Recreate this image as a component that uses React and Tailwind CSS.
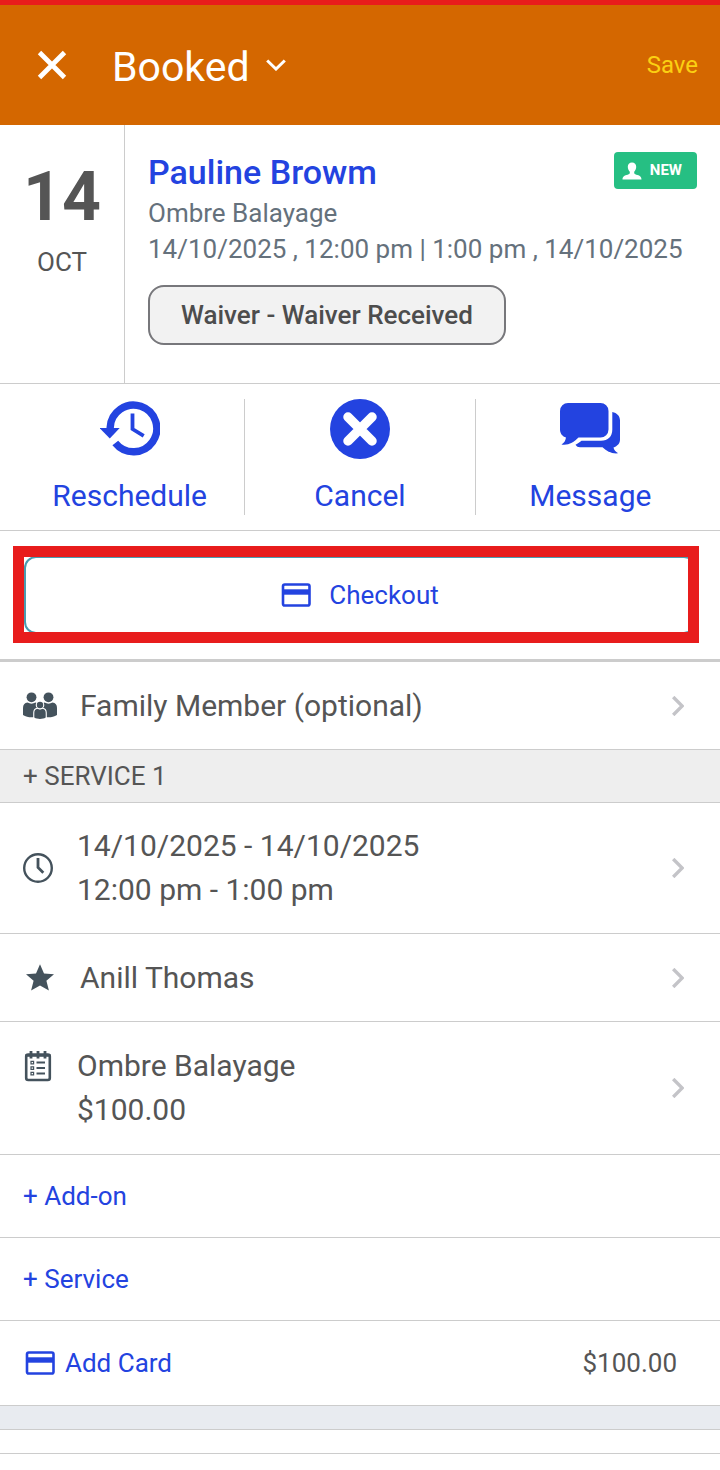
import React, { useState } from 'react';

const STATUSES = ['Booked'];

const CloseIcon = () => (
  <svg className="h-[30px] w-[30px]" viewBox="0 0 30 30" fill="none" stroke="currentColor" strokeWidth="4.8">
    <path d="M2.500 2.500l25 25M27.500 2.500l-25 25" />
  </svg>
);

const CaretIcon = () => (
  <svg className="pointer-events-none h-3 w-5" viewBox="0 0 20 12" fill="none" stroke="currentColor" strokeWidth="3">
    <path d="M1.200 1.500L10 10 18.800 1.500" />
  </svg>
);

const PersonIcon = () => (
  <svg className="h-[18px] w-5" viewBox="0 0 20 18" fill="currentColor">
    <path d="M10 .5c-2.600 0-4.200 1.700-4.200 4.300 0 2 .800 3.800 2 4.900v1.500c-.300.800-1.600 1.200-3.300 1.800C2.300 13.800.500 14.500.500 17.500h19c0-3-1.800-3.700-4-4.500-1.700-.600-3-1-3.300-1.800V9.700c1.200-1.100 2-2.900 2-4.900C14.200 2.200 12.600.500 10 .500z" />
  </svg>
);

const RescheduleIcon = () => (
  <svg className="h-[60px] w-[60px]" viewBox="0 0 60 60" fill="none" stroke="currentColor">
    <path d="M10.200 31V28.500A23.300 23.300 0 1 1 15.300 44" strokeWidth="7.400" />
    <path d="M-.5 29h20.200L9.800 39.500z" fill="currentColor" stroke="none" />
    <path d="M32.500 14.500v15.500l11.200 6.800" strokeWidth="3.800" />
  </svg>
);

const CancelIcon = () => (
  <svg className="h-[60px] w-[60px]" viewBox="0 0 60 60">
    <circle cx="30" cy="30" r="30" fill="currentColor" />
    <path d="M18 18l24 24M42 18L18 42" stroke="#fff" strokeWidth="9.500" strokeLinecap="round" />
  </svg>
);

const MessageIcon = () => (
  <svg className="h-[60px] w-[60px]" viewBox="0 0 60 60" fill="currentColor">
    <path d="M8 4h32.500a8 8 0 0 1 8 8v18.500a8 8 0 0 1-8 8H18.500C13.500 43.500 8.500 46.500 1.500 45.500c3-1.700 4-4 4.500-7C2.500 37.500 0 34.500 0 30.500V12a8 8 0 0 1 8-8z" />
    <path d="M52.300 13c4.700 1 7.700 4 7.700 8.500v19c0 4-2.500 6.500-6.500 8 .5 2.500 2 4.200 4.700 5.800-6.700.700-11.200-2-15.700-6H20c-2 0-3.500-.800-4.500-2.500 2.500-1.200 4.300-2.500 6-4H41c7 0 11.300-4.300 11.300-11.300z" />
  </svg>
);

const CardIcon = () => (
  <svg className="h-6 w-[30px]" viewBox="0 0 30 24" fill="none" stroke="currentColor">
    <rect x="2" y="1.500" width="26.500" height="21" rx="1.800" strokeWidth="2.600" />
    <path d="M2 9h27" strokeWidth="5.400" />
  </svg>
);

const FamilyIcon = () => (
  <svg className="h-7 w-[34px]" viewBox="0 0 34 28" fill="currentColor">
    <circle cx="8.500" cy="5.300" r="4.900" />
    <circle cx="25.500" cy="5.300" r="4.900" />
    <path d="M4.500 10.500c2.500 1.500 5.500 1.500 8 0 3 .500 4.300 2.500 4.300 5.500v7c-2.500 1.800-5.300 2.300-8.300 2.300S2.500 24.800 0 23v-7c0-3.500 1.500-5 4.500-5.500z" />
    <path d="M29.500 10.500c-2.500 1.500-5.500 1.500-8 0-3 .500-4.300 2.500-4.300 5.500v7c2.500 1.800 5.300 2.300 8.300 2.300s6-.500 8.500-2.300v-7c0-3.500-1.500-5-4.500-5.500z" />
    <path
      d="M14.500 16.800c1.600.900 3.400.900 5 0 2.200.300 3.200 1.700 3.200 4v4.700c-1.600 1-3.500 1.400-5.700 1.400s-4.100-.400-5.700-1.400v-4.700c0-2.300 1-3.700 3.200-4z"
      stroke="#fff"
      strokeWidth="2.200"
      paintOrder="stroke"
    />
    <circle cx="17" cy="13" r="3.200" stroke="#fff" strokeWidth="2.200" paintOrder="stroke" />
  </svg>
);

const ClockIcon = () => (
  <svg className="h-[30px] w-[30px]" viewBox="0 0 30 30" fill="none" stroke="currentColor">
    <circle cx="15" cy="15" r="13.800" strokeWidth="2.400" />
    <path d="M15 5v9.500l5.300 5.300" strokeWidth="2.800" />
  </svg>
);

const StarIcon = () => (
  <svg className="h-7 w-[34px]" viewBox="0 0 34 28" fill="currentColor">
    <path d="M17 .3l4 9.200 10 .8-7.600 6.400 2.500 9.900L17 21.400l-8.900 5.200 2.500-9.900L3 10.300l10-.8z" />
  </svg>
);

const ListIcon = () => (
  <svg className="h-[32px] w-[30px]" viewBox="0 0 30 32" fill="none" stroke="currentColor">
    <rect x="3.200" y="4.500" width="23.600" height="25.500" rx="2" strokeWidth="2.600" />
    <path d="M2.500 5.500h25" strokeWidth="2.600" />
    <path d="M8 1v7.500M15 1v7.500M22 1v7.500" strokeWidth="2.800" />
    <path d="M13.500 12.500H22M13.500 18H22M13.500 23.500H22" strokeWidth="2" />
    <path d="M8 11.300h2.600v2.600H8zM8 16.800h2.600v2.600H8zM8 22.300h2.600v2.600H8z" strokeWidth="1.200" />
  </svg>
);

const ChevronIcon = () => (
  <svg className="h-5 w-3 shrink-0 text-[#c4c4c8]" viewBox="0 0 12 20" fill="none" stroke="currentColor" strokeWidth="3.400">
    <path d="M1.200 1l9 9-9 9" />
  </svg>
);

const ACTIONS = [
  { label: 'Reschedule', Icon: RescheduleIcon },
  { label: 'Cancel', Icon: CancelIcon },
  { label: 'Message', Icon: MessageIcon },
];

const ROW = 'flex w-full items-center justify-between border-b border-[#cccccc] pr-9 pl-[23px] text-left text-[30px] leading-[44px]';

export default function App() {
  const [status, setStatus] = useState('Booked');

  return (
    <div className="min-h-screen bg-white font-['Roboto',sans-serif] text-[#555555]">
      {/* Header */}
      <header className="flex items-center justify-between border-t-[5px] border-[#e81c1c] bg-[#d46700] py-[30px] pr-[22px] pl-[37px] text-white">
        <div className="flex items-center gap-[45px]">
          <button aria-label="Close"><CloseIcon /></button>
          <div className="flex items-center gap-4">
            <select
              aria-label="Status"
              value={status}
              onChange={(e) => setStatus(e.target.value)}
              className="h-[60px] appearance-none bg-transparent pt-1 text-[41px] leading-[56px]"
            >
              {STATUSES.map((s) => <option key={s}>{s}</option>)}
            </select>
            <CaretIcon />
          </div>
        </div>
        <button className="text-2xl text-[#fbd012]">Save</button>
      </header>

      {/* Appointment summary */}
      <section className="flex border-b border-[#cccccc]">
        <div className="w-[125px] shrink-0 border-r border-[#cccccc] pt-9 text-center">
          <p className="text-[68px] leading-[72px] font-bold">14</p>
          <p className="pt-[11px] text-[26px] leading-9">OCT</p>
        </div>
        <div className="min-w-0 flex-1 px-[23px] pt-[27px] pb-[38px]">
          <div className="mb-[3px] flex items-start justify-between">
            <h1 className="text-[34px] leading-10 font-medium text-[#2343e0]">Pauline Browm</h1>
            <span className="flex items-center gap-2 rounded bg-[#26bf83] py-1.5 pr-[15px] pl-2 text-[15px] leading-[25px] font-bold text-white">
              <PersonIcon />
              NEW
            </span>
          </div>
          <div className="text-[26px] leading-9 whitespace-nowrap text-[#65717c]">
            <p>Ombre Balayage</p>
            <p>14/10/2025 , 12:00 pm | 1:00 pm , 14/10/2025</p>
          </div>
          <button className="mt-[18px] rounded-2xl border-2 border-[#77777b] bg-[#f2f2f2] px-[31px] py-2.5 text-[26px] leading-9 font-medium text-[#4d4d4d]">
            Waiver - Waiver Received
          </button>
        </div>
      </section>

      {/* Actions */}
      <nav className="flex border-b border-[#cccccc] p-[15px]">
        {ACTIONS.map(({ label, Icon }) => (
          <button
            key={label}
            className="flex flex-1 flex-col items-center gap-[17px] border-r border-[#cccccc] text-[30px] leading-[39px] text-[#2343e0] last:border-r-0"
          >
            <Icon />
            {label}
          </button>
        ))}
      </nav>

      {/* Checkout */}
      <section className="relative border-b-[3px] border-[#cccccc] px-6 py-[25px]">
        <button className="flex w-full items-center justify-center gap-[18px] rounded-xl border-2 border-[#4a9cb0] py-[19px] text-[26px] leading-9 text-[#2343e0]">
          <CardIcon />
          Checkout
        </button>
        <div className="pointer-events-none absolute top-[15px] right-[21px] bottom-4 left-[13px] border-[11px] border-[#e81c1c]" />
      </section>

      <button className={`${ROW} pt-[22px] pb-[21px]`}>
        <span className="flex items-center gap-[23px]">
          <span className="text-[#44525c]"><FamilyIcon /></span>
          Family Member (optional)
        </span>
        <ChevronIcon />
      </button>

      {/* Service */}
      <h2 className="border-b border-[#cccccc] bg-[#eeeeee] px-[23px] py-2 text-[26px] leading-9">+ SERVICE 1</h2>
      <button className={`${ROW} py-[21px]`}>
        <span className="flex items-center gap-6">
          <span className="text-[#44525c]"><ClockIcon /></span>
          <span>
            14/10/2025 - 14/10/2025
            <br />
            12:00 pm - 1:00 pm
          </span>
        </span>
        <ChevronIcon />
      </button>
      <button className={`${ROW} pt-[22px] pb-[21px]`}>
        <span className="flex items-center gap-[23px]">
          <span className="text-[#44525c]"><StarIcon /></span>
          Anill Thomas
        </span>
        <ChevronIcon />
      </button>
      <button className={`${ROW} py-[22px]`}>
        <span className="flex items-start gap-6">
          <span className="pt-1.5 text-[#44525c]"><ListIcon /></span>
          <span>
            Ombre Balayage
            <br />
            $100.00
          </span>
        </span>
        <ChevronIcon />
      </button>

      {['+ Add-on', '+ Service'].map((label) => (
        <button
          key={label}
          className="block w-full border-b border-[#cccccc] p-[23px] text-left text-[26px] leading-9 text-[#2343e0]"
        >
          {label}
        </button>
      ))}

      {/* Payment */}
      <div className="flex items-center justify-between border-b border-[#cccccc] py-6 pr-[43px] pl-[25px] text-[26px] leading-9">
        <button className="flex items-center gap-2.5 text-[#2343e0]">
          <CardIcon />
          Add Card
        </button>
        <span>$100.00</span>
      </div>
      <div className="h-6 border-b border-[#cccccc] bg-[#e8ebf0]" />
      <div className="h-6 border-b border-[#cccccc]" />
    </div>
  );
}
